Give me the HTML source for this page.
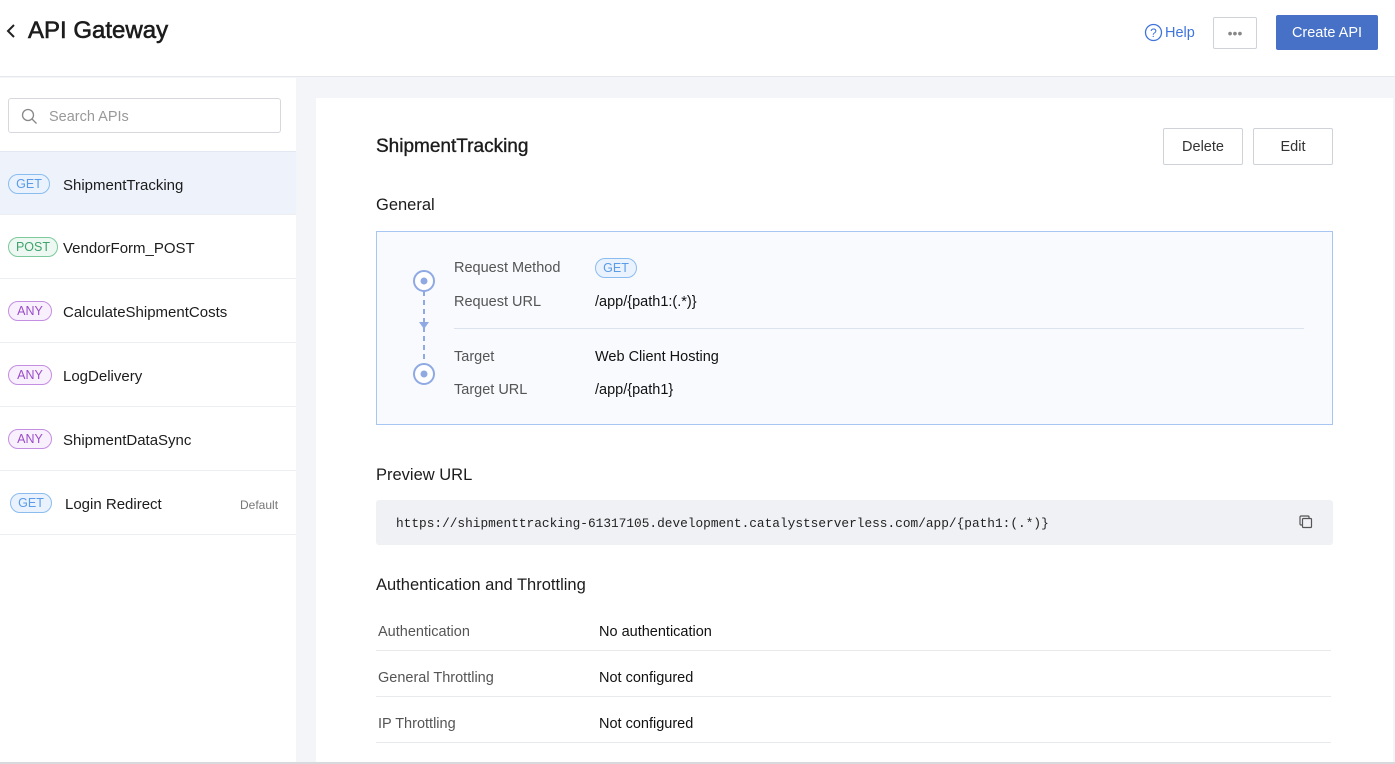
<!DOCTYPE html>
<html><head><meta charset="utf-8"><style>
*{box-sizing:border-box;margin:0;padding:0}
body{width:1395px;height:764px;overflow:hidden;background:#f4f5f8;font-family:"Liberation Sans",sans-serif;color:#1c1c1c;position:relative}
.abs{position:absolute}
.top{left:0;top:0;width:1395px;height:77px;background:#fff;border-bottom:1px solid #e6e8ee}
.side{left:0;top:78px;width:296px;height:686px;background:#fff}
.card{left:316px;top:98px;width:1077px;height:664px;background:#fff}
.badge{position:absolute;height:20px;border-radius:10px;font-size:12.5px;line-height:18px;text-align:center;border:1px solid}
.get{color:#5b9be8;border-color:#8bbcf0;background:#eaf3fd}
.post{color:#3fa36b;border-color:#7cc99d;background:#eef8f2}
.any{color:#9b4cc8;border-color:#c58ee2;background:#f8f0fc}
.item{position:absolute;left:0;width:296px;height:64px;border-bottom:1px solid #eceef2}
.item .n{position:absolute;top:25px;font-size:15px}
.lbl{font-size:14.5px;color:#555}
.val{font-size:14.5px;color:#111}
.btn{position:absolute;border:1px solid #cfd2d8;background:#fff;border-radius:2px;font-size:14.5px;text-align:center;color:#333}
.row{position:absolute;left:376px;width:955px;height:1px;background:#e9eaee}
.h{-webkit-text-stroke:0.35px #1c1c1c}
</style></head><body>
<div class="abs top"></div>
<svg class="abs" style="left:5px;top:23px" width="12" height="16"><path d="M9 2L3 8l6 6" stroke="#222" stroke-width="2" fill="none"/></svg>
<div class="abs h" style="left:28px;top:17px;font-size:24px;-webkit-text-stroke:0.6px #1c1c1c">API Gateway</div>
<svg class="abs" style="left:1144px;top:23px" width="19" height="19"><circle cx="9.5" cy="9.5" r="8" stroke="#3f74dc" stroke-width="1.3" fill="none"/><text x="9.5" y="14" font-size="12" text-anchor="middle" fill="#3f74dc" font-family="Liberation Sans">?</text></svg>
<div class="abs" style="left:1165px;top:25px;font-size:14.5px;color:#3f74dc">Help</div>
<div class="btn" style="left:1213px;top:17px;width:44px;height:32px;line-height:30px;color:#888;font-size:14px">•••</div>
<div class="abs" style="left:1276px;top:15px;width:102px;height:35px;background:#4671c6;border-radius:2px;color:#fff;font-size:14.5px;text-align:center;line-height:36px">Create API</div>

<div class="abs side"></div>
<div class="abs" style="left:8px;top:98px;width:273px;height:35px;border:1px solid #d6d8de;border-radius:3px"></div>
<svg class="abs" style="left:21px;top:108px" width="17" height="17"><circle cx="7" cy="7" r="5.5" stroke="#888" stroke-width="1.3" fill="none"/><path d="M11 11l4.5 4.5" stroke="#888" stroke-width="1.3"/></svg>
<div class="abs" style="left:49px;top:109px;font-size:14.5px;color:#999">Search APIs</div>
<div class="item" style="top:151px;background:#edf2fb;border-top:1px solid #e2e7f1"><div class="badge get" style="left:8px;top:22px;width:42px">GET</div><div class="n" style="left:63px">ShipmentTracking</div></div>
<div class="item" style="top:215px"><div class="badge post" style="left:8px;top:22px;width:50px">POST</div><div class="n" style="left:63px">VendorForm_POST</div></div>
<div class="item" style="top:279px"><div class="badge any" style="left:8px;top:22px;width:44px">ANY</div><div class="n" style="left:63px">CalculateShipmentCosts</div></div>
<div class="item" style="top:343px"><div class="badge any" style="left:8px;top:22px;width:44px">ANY</div><div class="n" style="left:63px">LogDelivery</div></div>
<div class="item" style="top:407px"><div class="badge any" style="left:8px;top:22px;width:44px">ANY</div><div class="n" style="left:63px">ShipmentDataSync</div></div>
<div class="item" style="top:471px"><div class="badge get" style="left:10px;top:22px;width:42px">GET</div><div class="n" style="left:65px">Login Redirect</div><div style="position:absolute;left:240px;top:27px;font-size:12px;color:#777">Default</div></div>

<div class="abs card"></div>
<div class="abs h" style="left:376px;top:136px;font-size:19px">ShipmentTracking</div>
<div class="btn" style="left:1163px;top:128px;width:80px;height:37px;line-height:37px">Delete</div>
<div class="btn" style="left:1253px;top:128px;width:80px;height:37px;line-height:37px">Edit</div>
<div class="abs" style="left:376px;top:196px;font-size:16.5px">General</div>
<div class="abs" style="left:376px;top:231px;width:957px;height:194px;border:1px solid #a9c6f3;background:#f8fafe"></div>
<svg class="abs" style="left:410px;top:266px" width="28" height="124"><circle cx="14" cy="15" r="10" stroke="#8fa9e3" stroke-width="2" fill="#fff"/><circle cx="14" cy="15" r="3.5" fill="#8fa9e3"/><path d="M14 25V98" stroke="#8fa9e3" stroke-width="2" stroke-dasharray="5 4"/><path d="M9 56h10l-5 7z" fill="#8fa9e3"/><circle cx="14" cy="108" r="10" stroke="#8fa9e3" stroke-width="2" fill="#fff"/><circle cx="14" cy="108" r="3.5" fill="#8fa9e3"/></svg>
<div class="abs lbl" style="left:454px;top:260px">Request Method</div>
<div class="badge get" style="left:595px;top:258px;width:42px;height:20px">GET</div>
<div class="abs lbl" style="left:454px;top:294px">Request URL</div>
<div class="abs val" style="left:595px;top:294px">/app/{path1:(.*)}</div>
<div class="abs" style="left:454px;top:328px;width:850px;height:1px;background:#dde3ee"></div>
<div class="abs lbl" style="left:454px;top:349px">Target</div>
<div class="abs val" style="left:595px;top:349px">Web Client Hosting</div>
<div class="abs lbl" style="left:454px;top:382px">Target URL</div>
<div class="abs val" style="left:595px;top:382px">/app/{path1}</div>

<div class="abs" style="left:376px;top:466px;font-size:16.5px">Preview URL</div>
<div class="abs" style="left:376px;top:500px;width:957px;height:45px;background:#f0f1f5;border-radius:3px"></div>
<div class="abs" style="left:396px;top:516px;font-family:'Liberation Mono',monospace;font-size:12.8px;color:#222">https://shipmenttracking-61317105.development.catalystserverless.com/app/{path1:(.*)}</div>
<svg class="abs" style="left:1299px;top:515px" width="15" height="15"><rect x="1" y="1" width="9" height="9" rx="1" stroke="#555" stroke-width="1.2" fill="none"/><rect x="3.5" y="3.5" width="9" height="9" rx="1" stroke="#555" stroke-width="1.2" fill="#f0f1f5"/></svg>

<div class="abs" style="left:376px;top:576px;font-size:16.5px">Authentication and Throttling</div>
<div class="abs lbl" style="left:378px;top:624px">Authentication</div><div class="abs val" style="left:599px;top:624px">No authentication</div>
<div class="row" style="top:650px"></div>
<div class="abs lbl" style="left:378px;top:670px">General Throttling</div><div class="abs val" style="left:599px;top:670px">Not configured</div>
<div class="row" style="top:696px"></div>
<div class="abs lbl" style="left:378px;top:716px">IP Throttling</div><div class="abs val" style="left:599px;top:716px">Not configured</div>
<div class="row" style="top:742px"></div>
<div class="abs" style="left:0;top:762px;width:1395px;height:2px;background:#d8d9dd"></div>
</body></html>
